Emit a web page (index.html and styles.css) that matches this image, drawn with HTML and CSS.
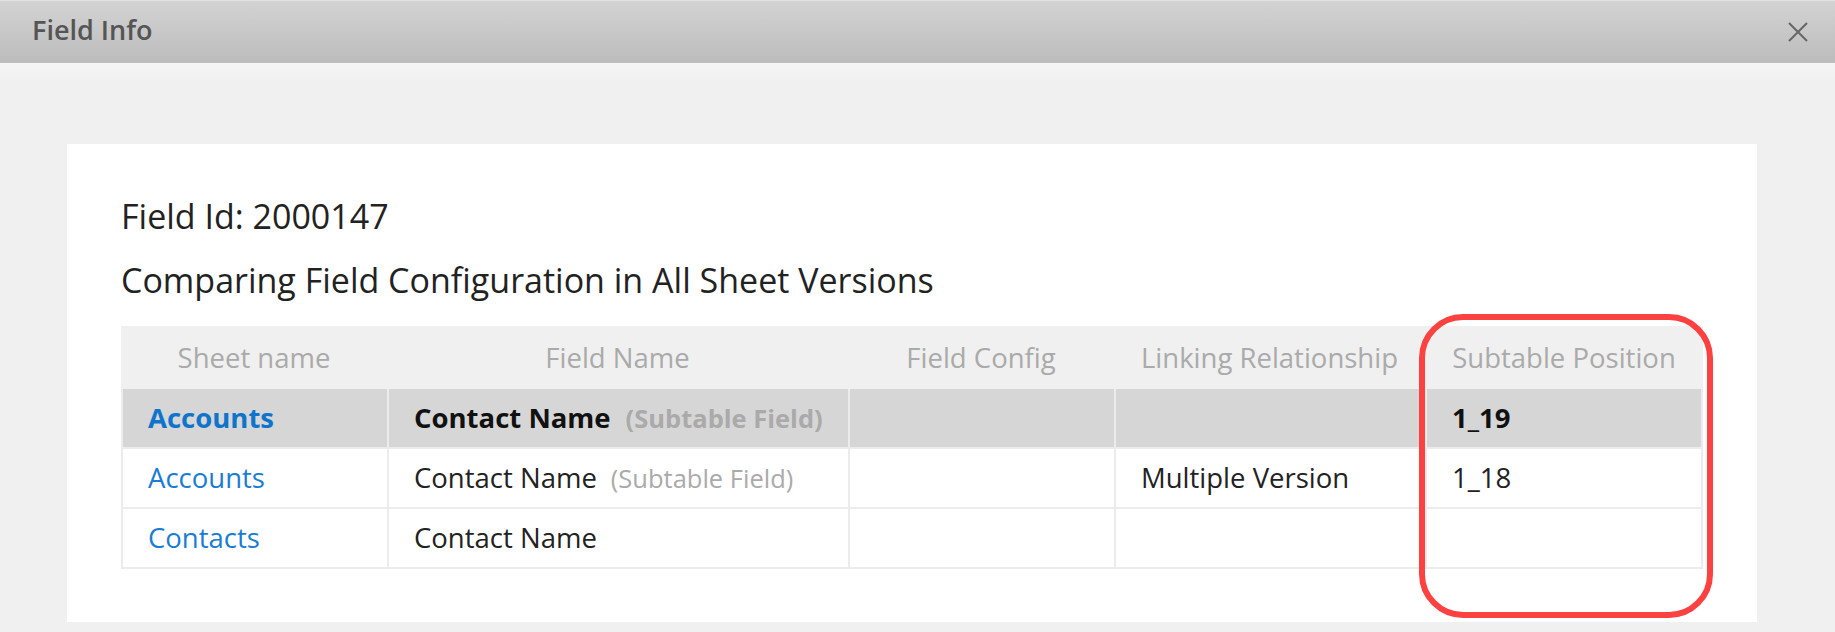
FILE: index.html
```html
<!DOCTYPE html>
<html lang="en">
<head>
<meta charset="utf-8">
<title>Field Info</title>
<link rel="stylesheet" href="styles.css">
</head>
<body>
<header class="dialog-header">
  <span class="dialog-title">Field Info</span>
  <button class="close-btn" aria-label="Close">
    <svg width="20" height="20" viewBox="0 0 20 20"><path d="M1 1 L19 19 M19 1 L1 19" stroke="#666" stroke-width="2" fill="none"/></svg>
  </button>
</header>
<main class="dialog-body">
  <section class="card">
    <h2 class="card-line">Field Id: 2000147</h2>
    <h2 class="card-line second">Comparing Field Configuration in All Sheet Versions</h2>
    <table class="cmp-table">
      <colgroup>
        <col class="c1"><col class="c2"><col class="c3"><col class="c4"><col class="c5">
      </colgroup>
      <thead>
        <tr>
          <th>Sheet name</th>
          <th>Field Name</th>
          <th>Field Config</th>
          <th>Linking Relationship</th>
          <th>Subtable Position</th>
        </tr>
      </thead>
      <tbody>
        <tr class="current">
          <td><a class="sheet-link">Accounts</a></td>
          <td>Contact Name<span class="sub">(Subtable Field)</span></td>
          <td></td>
          <td></td>
          <td>1_19</td>
        </tr>
        <tr>
          <td><a class="sheet-link">Accounts</a></td>
          <td>Contact Name<span class="sub">(Subtable Field)</span></td>
          <td></td>
          <td>Multiple Version</td>
          <td>1_18</td>
        </tr>
        <tr>
          <td><a class="sheet-link">Contacts</a></td>
          <td>Contact Name</td>
          <td></td>
          <td></td>
          <td></td>
        </tr>
      </tbody>
    </table>
    <div class="highlight-ring"></div>
  </section>
</main>
</body>
</html>
```
FILE: styles.css
```css
* { box-sizing: border-box; }
html, body {
  margin: 0;
  padding: 0;
}
body {
  width: 1835px;
  height: 632px;
  overflow: hidden;
  background: #f0f0f0;
  font-family: "Open Sans", "Noto Sans", sans-serif;
  color: #222;
}
.dialog-header {
  height: 63px;
  display: flex;
  align-items: flex-start;
  justify-content: space-between;
  padding: 0 27px 0 32px;
  background: linear-gradient(#d3d3d3, #bcbcbc);
  border-top: 1px solid #e2e2e2;
}
.dialog-title {
  font-size: 27px;
  font-weight: 600;
  color: #555;
  line-height: 57px;
}
.close-btn {
  margin-top: 21px;
  padding: 0;
  border: 0;
  background: none;
  width: 20px;
  height: 20px;
  display: block;
}
.close-btn svg { display: block; }
.dialog-body {
  padding: 81px 78px 10px 67px;
  background: linear-gradient(#f5f5f5, #f0f0f0 20px);
}
.card {
  position: relative;
  background: #fff;
  height: 478px;
  padding: 50px 54px 0 54px;
}
.card-line {
  margin: 0;
  font-size: 34px;
  font-weight: 400;
  line-height: 45px;
  color: #222;
}
.card-line.second { margin-top: 19px; }
.cmp-table {
  margin-top: 23px;
  width: 1582px;
  table-layout: fixed;
  border-collapse: separate;
  border-spacing: 0;
  font-size: 27.5px;
}
.c1 { width: 266px; }
.c2 { width: 461px; }
.c3 { width: 266px; }
.c4 { width: 311px; }
.c5 { width: 278px; }
.cmp-table th {
  background: #f0f0f0;
  color: #aaa;
  font-weight: 400;
  line-height: 63px;
  padding: 0;
  text-align: center;
  white-space: nowrap;
}
.cmp-table td {
  line-height: 58px;
  padding: 0 25px;
  border-left: 2px solid #ececec;
  border-bottom: 2px solid #ececec;
  white-space: nowrap;
  color: #222;
}
.cmp-table td:last-child { border-right: 2px solid #ececec; }
.cmp-table tr.current td {
  background: #d6d6d6;
  font-weight: 700;
  color: #111;
}
.sheet-link {
  color: #1a7dd3;
  text-decoration: none;
}
.cmp-table tr.current .sheet-link { color: #0f74cc; }
.sub {
  font-size: 25.5px;
  line-height: 1;
  color: #aaa;
  margin-left: 14px;
}
.cmp-table tr.current .sub { color: #aaa; margin-left: 15px; }
.highlight-ring {
  position: absolute;
  left: 1352px;
  top: 170px;
  width: 294px;
  height: 304px;
  border: 6px solid #fc4141;
  border-radius: 44px;
  pointer-events: none;
}
```
